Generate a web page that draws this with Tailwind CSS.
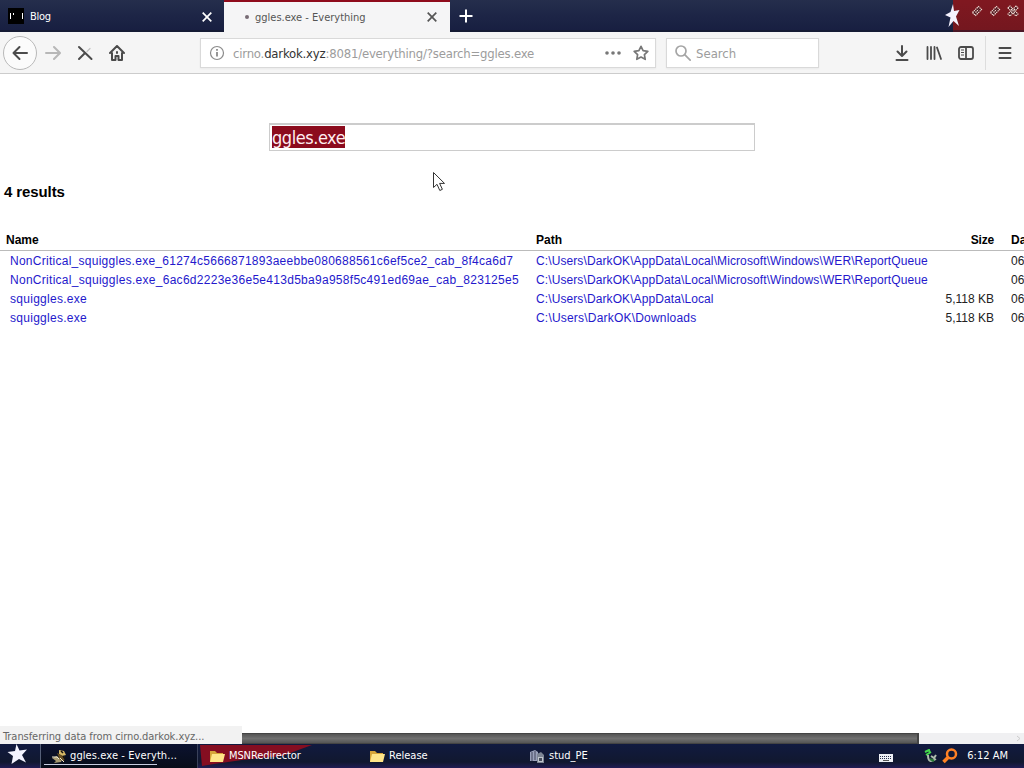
<!DOCTYPE html>
<html lang="en">
<head>
    <meta charset="UTF-8" />
    <title>ggles.exe - Everything</title>
    <script src="https://cdn.jsdelivr.net/npm/@tailwindcss/browser@4"></script>
</head>
<body class="relative flex h-[768px] w-[1024px] flex-col overflow-hidden bg-white font-['DejaVu_Sans_Condensed','DejaVu_Sans',sans-serif] text-[11px] whitespace-nowrap">
    <!-- Tab bar -->
    <header class="flex h-8 shrink-0 bg-linear-to-b from-[#252e4c] via-[#1d2546] to-[#171e40] text-white">
        <div class="flex h-full w-56 items-center border-b-2 border-[#151b34] pt-0.5 pl-2">
            <svg class="h-4 w-4 bg-black" viewBox="0 0 16 16" fill="#fff"><path d="M2 5h1v6H2zM5 5h1v2H5zM14 5h1v6h-1z" /></svg>
            <span class="ml-1.5 grow pt-0.5 tracking-[-0.3px]">Blog</span>
            <svg class="mt-px mr-3 h-[10px] w-[10px]" viewBox="0 0 10 10" stroke="#fff" stroke-width="1.7"><path d="M.7.7l8.6 8.6M9.3.7L.7 9.3" /></svg>
        </div>
        <div class="flex h-full w-[226px] items-center border-t-2 border-[#8f0b1c] bg-[#f5f5f6] text-[#555]">
            <span class="ml-[21px] h-1 w-1 rounded-full bg-[#776b74]"></span>
            <span class="ml-1.5 grow pt-0.5">ggles.exe - Everything</span>
            <svg class="mr-[13px] h-[10px] w-[10px]" viewBox="0 0 10 10" stroke="#555" stroke-width="1.7"><path d="M.7.7l8.6 8.6M9.3.7L.7 9.3" /></svg>
        </div>
        <div class="flex h-full w-[503px] items-center justify-between border-b-2 border-[#151b34] pt-0.5">
            <svg class="ml-2 h-4 w-4" viewBox="0 0 16 16" stroke="#fff" stroke-width="2"><path d="M8 1.5v13M1.5 8h13" /></svg>
        </div>
        <div class="relative flex h-full w-[71px] gap-[6px] border-b-2 border-[#4b1726] bg-linear-to-b from-[#801820] to-[#74171f] pt-[5px] pl-[18px]">
            <svg class="absolute top-[3px] -left-[9px] h-[25px] w-[17px]" viewBox="0 0 17 25" fill="#f5f2ff"><path d="M9 1l1 7 5.500-1-3.500 6.500 3 9.500-5.500-5-5 6 2-9.500L1 12l5.500-3z" /></svg>
            <svg class="h-3 w-3" viewBox="0 0 12 12" fill="#4a1018" stroke="#f0dcd4" stroke-width="1.2" stroke-dasharray="1.4 .6"><path d="M1.500 7.500l6-6 3 3-6 6zM4.500 7.500l3-3" /></svg>
            <svg class="h-3 w-3" viewBox="0 0 12 12" fill="#4a1018" stroke="#f0dcd4" stroke-width="1.2" stroke-dasharray="1.4 .6"><path d="M1.500 7.500l6-6 3 3-6 6zM4.500 7.500l3-3" /></svg>
            <svg class="h-3 w-3" viewBox="0 0 12 12" fill="#4a1018" stroke="#f0dcd4" stroke-width="1.1" stroke-dasharray="1.4 .6"><path d="M1 3l2-2 3 3 3-3 2 2-3 3 3 3-2 2-3-3-3 3-2-2 3-3zM4 4l4 4M8 4L4 8" /></svg>
        </div>
    </header>

    <!-- Navigation toolbar -->
    <nav class="flex h-[42px] shrink-0 items-center border-b border-[#ccc] bg-[#f5f5f5] text-[#4b4b4b]">
        <div class="ml-[3px] flex h-[34px] w-[34px] items-center justify-center rounded-full border border-[#b9b9b9] bg-[#fbfbfb]">
            <svg class="h-4 w-4" viewBox="0 0 16 16" fill="none" stroke="currentColor" stroke-width="2" stroke-linecap="round" stroke-linejoin="round"><path d="M15 8H1.500M7.500 2l-6 6 6 6" /></svg>
        </div>
        <svg class="ml-2 h-4 w-4 text-[#b7b7b7]" viewBox="0 0 16 16" fill="none" stroke="currentColor" stroke-width="2" stroke-linecap="round" stroke-linejoin="round"><path d="M1 8h13.500M9 2l6 6-6 6" /></svg>
        <svg class="ml-4 h-4 w-4" viewBox="0 0 16 16" fill="none" stroke="currentColor" stroke-width="2" stroke-linecap="round"><path d="M2 2l12.500 12M7.500 8.500l-5.500 5.500" /><path d="M13 3.500L10 6.500" stroke-width="1.2" opacity=".3" /></svg>
        <svg class="ml-4 h-4 w-4" viewBox="0 0 16 16" fill="none" stroke="currentColor" stroke-width="2" stroke-linecap="round" stroke-linejoin="round"><path d="M1 8l7-7 7 7M3 8v7h3.500v-4h3v4H13V8M8 7v1" /></svg>
        <div class="ml-[75px] flex h-[30px] w-[456px] items-center border border-[#d9d9d9] bg-white text-[13px] text-[#9c9c9c] shadow-xs">
            <svg class="ml-2 h-4 w-4" viewBox="0 0 16 16" fill="none" stroke="#8b8b8b" stroke-width="1.200"><circle cx="8" cy="8" r="6.500" /><path d="M8 7v4.500M8 4v1.800" stroke-width="1.800" /></svg>
            <span class="ml-2 grow pt-0.5 tracking-[-0.2px]">cirno.<span class="text-[#333]">darkok.xyz</span>:8081/everything/?search=ggles.exe</span>
            <svg class="mr-3 h-4 w-4" viewBox="0 0 16 16" fill="#777"><circle cx="2" cy="8" r="1.800" /><circle cx="8" cy="8" r="1.800" /><circle cx="14" cy="8" r="1.800" /></svg>
            <svg class="mr-1.5 h-4 w-4" viewBox="0 0 16 16" fill="none" stroke="#777" stroke-width="1.700" stroke-linejoin="round"><path d="M8 1.300l2.100 4.300 4.700.7-3.400 3.300.8 4.700L8 12.100l-4.200 2.200.8-4.700L1.200 6.300l4.700-.7z" /></svg>
        </div>
        <div class="ml-2.5 flex h-[30px] w-[153px] items-center border border-[#d9d9d9] bg-white text-[13px] text-[#9c9c9c] shadow-xs">
            <svg class="ml-2 h-4 w-4" viewBox="0 0 16 16" fill="none" stroke="#a5a5a5" stroke-width="1.700"><circle cx="6" cy="6" r="5" /><path d="M9.700 9.700l6 6" /></svg>
            <span class="ml-[5px] pt-0.5">Search</span>
        </div>
        <svg class="ml-[75px] h-4 w-4" viewBox="0 0 16 16" fill="none" stroke="currentColor" stroke-width="2" stroke-linecap="round" stroke-linejoin="round"><path d="M8 1v9.500M3.500 6.500L8 11l4.500-4.500M2.500 15h11" /></svg>
        <svg class="ml-4 h-4 w-4" viewBox="0 0 16 16" fill="none" stroke="currentColor" stroke-width="1.800" stroke-linecap="round"><path d="M1.500 2v12M5 2v12M8.500 2v12M11 2.500L15 14" /></svg>
        <svg class="ml-4 h-4 w-4" viewBox="0 0 16 16" fill="none" stroke="currentColor" stroke-width="1.800"><rect x="1" y="2" width="14" height="12" rx="2" /><path d="M8 2v12" /><path d="M3 5h3M3 7.500h3M3 10h3" stroke-width="1" /></svg>
        <span class="ml-[11px] h-[34px] w-px bg-[#ddd]"></span>
        <svg class="ml-[11px] h-4 w-4" viewBox="0 0 16 16" stroke="currentColor" stroke-width="2" stroke-linecap="round"><path d="M2.500 3h11M2.500 8h11M2.500 13h11" /></svg>
    </nav>

    <!-- Page -->
    <main class="flex h-[659px] w-full shrink-0 flex-col overflow-hidden font-['Liberation_Sans',Arial,sans-serif] text-[12px] text-black">
        <div class="mx-auto mt-[49px] flex h-7 w-[486px] items-start border border-t-2 border-[#ccc] pt-px pl-0.5 font-['DejaVu_Sans_Condensed','DejaVu_Sans',sans-serif] text-[18px]">
            <span class="h-[22px] bg-[#8c0b1d] leading-[23px] tracking-[-0.45px] text-[#ffeef0]">ggles.exe</span>
        </div>
        <p class="mt-[31px] ml-1 text-[15px] leading-5 font-bold tracking-[-0.1px]">4 results</p>
        <table class="mt-[29px] w-[1100px] table-fixed border-collapse text-left leading-[19px]">
            <colgroup>
                <col class="w-[532px]" />
                <col class="w-[396px]" />
                <col class="w-[70px]" />
                <col class="w-[102px]" />
            </colgroup>
            <thead>
                <tr class="h-[19px] border-b border-[#bbb]">
                    <th class="p-0 pl-1.5">Name</th>
                    <th class="p-0 pl-1">Path</th>
                    <th class="p-0 pr-1 text-right tracking-[-0.2px]">Size</th>
                    <th class="p-0 pl-[13px]">Date Modified</th>
                </tr>
            </thead>
            <tbody class="text-[#222]">
                <tr class="h-5">
                    <td class="p-0 pt-px pl-2.5 tracking-[0.265px] text-[#2418cc]">NonCritical_squiggles.exe_61274c5666871893aeebbe080688561c6ef5ce2_cab_8f4ca6d7</td>
                    <td class="p-0 pt-px pl-1 tracking-[0.1px] text-[#2418cc]">C:\Users\DarkOK\AppData\Local\Microsoft\Windows\WER\ReportQueue</td>
                    <td></td>
                    <td class="p-0 pt-px pl-[13px]">06/12/2018</td>
                </tr>
                <tr class="h-[19px]">
                    <td class="p-0 pl-2.5 tracking-[0.28px] text-[#2418cc]">NonCritical_squiggles.exe_6ac6d2223e36e5e413d5ba9a958f5c491ed69ae_cab_823125e5</td>
                    <td class="p-0 pl-1 tracking-[0.1px] text-[#2418cc]">C:\Users\DarkOK\AppData\Local\Microsoft\Windows\WER\ReportQueue</td>
                    <td></td>
                    <td class="p-0 pl-[13px]">06/12/2018</td>
                </tr>
                <tr class="h-[19px]">
                    <td class="p-0 pl-2.5 tracking-[0.28px] text-[#2418cc]">squiggles.exe</td>
                    <td class="p-0 pl-1 tracking-[0.1px] text-[#2418cc]">C:\Users\DarkOK\AppData\Local</td>
                    <td class="p-0 pr-1 text-right">5,118 KB</td>
                    <td class="p-0 pl-[13px]">06/12/2018</td>
                </tr>
                <tr class="h-[19px]">
                    <td class="p-0 pl-2.5 tracking-[0.28px] text-[#2418cc]">squiggles.exe</td>
                    <td class="p-0 pl-1 tracking-[0.2px] text-[#2418cc]">C:\Users\DarkOK\Downloads</td>
                    <td class="p-0 pr-1 text-right">5,118 KB</td>
                    <td class="p-0 pl-[13px]">06/12/2018</td>
                </tr>
            </tbody>
        </table>
    </main>

    <!-- Horizontal scrollbar -->
    <div class="flex h-[11px] shrink-0 justify-between bg-[#f0f0f2]">
        <div class="ml-[242px] h-full w-[677px] border-y border-r-2 border-[#444] bg-linear-to-b from-[#555] via-[#707070] to-[#555]"></div>
        <svg class="h-[11px] w-3" viewBox="0 0 12 11" fill="none" stroke="#ccc"><path d="M5 3l3 2.500L5 8" /></svg>
    </div>
    <div class="absolute bottom-6 left-0 flex h-[18px] w-[242px] items-center bg-[#f2f2f2] pt-1 pl-[3px] tracking-[-0.06px] text-[#666]">Transferring data from cirno.darkok.xyz...</div>

    <!-- Mouse pointer -->
    <svg class="absolute top-[171px] left-[432px] h-[21px] w-[14px]" viewBox="0 0 14 21" fill="#fff" stroke="#333"><path d="M1.500 1.500v15l3.500-3.200 2.800 6.200 2.600-1.200-2.800-5.900h4.900z" /></svg>

    <!-- Taskbar -->
    <footer class="flex h-6 shrink-0 items-center bg-linear-to-b from-[#111a40] via-[#11182f] via-75% to-[#211c54] text-white">
        <svg class="mb-1 ml-[7px] h-5 w-5" viewBox="0 0 20 20" fill="#f4f4ff"><path d="M9.500 0l3 6.500 7.500-1-5 5.500 4 7.500-7-3.500-7.500 5 1.500-8-5.500-4 7.500-1z" /></svg>
        <div class="relative ml-[13px] flex h-full w-[157px] items-center border-l border-[#566078] bg-linear-to-b from-[#0c1230] to-[#080d19] pt-px pl-[10px]">
            <svg class="h-[15px] w-[17px]" viewBox="0 0 17 15"><path d="M1 9l5-2 2 2 5-3-3 7-7 1 2-2z" fill="#a99c72" /><path d="M8 1l5 1 2 4-4 1-3-2z" fill="#d6b866" /><path d="M6 4l4 2 4 2-1 4-4-1z" fill="#695123" /><path d="M1 8h5l2 2M9 9l4 4" stroke="#f0ead0" fill="none" /><path d="M10 2l2 2M12 7l2 3" stroke="#16120e" stroke-width="1.500" /></svg>
            <span class="ml-0.5 tracking-[0.1px]">ggles.exe - Everyth...</span>
            <span class="absolute bottom-[3px] left-[3px] h-px w-[113px] bg-[#c8cce0]"></span>
        </div>
        <div class="relative flex h-full w-[161px] items-center border-l border-[#39415a] pl-[11px]">
            <svg class="absolute top-0 left-0 h-6 w-[120px]" viewBox="0 0 120 24" preserveAspectRatio="none"><path d="M2 1h112L84 12 44 16 16 20 4 22z" fill="#850e21" /></svg>
            <svg class="relative h-[14px] w-4" viewBox="0 0 16 14"><path d="M1 2h5l2 2h6v9H1z" fill="#d7a539" /><path d="M3 5h13l-2 8H1z" fill="#ffe588" /></svg>
            <span class="relative ml-1 tracking-[-0.1px]">MSNRedirector</span>
        </div>
        <div class="flex h-full w-[160px] items-center pl-[11px]">
            <svg class="h-[14px] w-4" viewBox="0 0 16 14"><path d="M1 2h5l2 2h6v9H1z" fill="#d7a539" /><path d="M3 5h13l-2 8H1z" fill="#ffe588" /></svg>
            <span class="ml-1">Release</span>
        </div>
        <div class="flex h-full grow items-center pl-[11px]">
            <svg class="h-[15px] w-4" viewBox="0 0 16 15"><path d="M1 3l5-2 3 2v9H1z" fill="#99a0ba" /><path d="M3 3v9M6 2v9" stroke="#42475c" /><path d="M8 5l4-2 3 3v8H8z" fill="#7d8594" /><path d="M9 8h5v5H9z" fill="#c0c6cc" /><path d="M10 9h3v3h-3z" fill="#454b5b" /></svg>
            <span class="ml-1">stud_PE</span>
        </div>
        <svg class="mt-1 mr-[31px] h-2 w-[14px]" viewBox="0 0 14 8"><path d="M0 0h14v8H0z" fill="#eef0f5" /><path d="M1 2.500h12M1 4.500h12" stroke="#29304b" stroke-dasharray="1 1" /><path d="M4 6.500h6" stroke="#555" /></svg>
        <svg class="mr-[5px] mb-px h-[14px] w-[13px]" viewBox="0 0 13 14" fill="none"><path d="M1 3l4-2 1 3M2 6l5-3" stroke="#45d84c" stroke-width="2" /><path d="M4 6c0 7 3 7 8 4M7 7l3 2 2-3" stroke="#aebcac" stroke-width="2" /><path d="M6 10l4 2" stroke="#267933" stroke-width="2" /></svg>
        <svg class="h-4 w-4" viewBox="0 0 16 16" fill="none" stroke="#ff8124"><circle cx="9.500" cy="6" r="4.500" stroke-width="2.500" /><path d="M6 9.500L1.500 14" stroke-width="3.500" /></svg>
        <span class="mr-4 ml-[9px] pt-px">6:12 AM</span>
    </footer>
</body>
</html>
